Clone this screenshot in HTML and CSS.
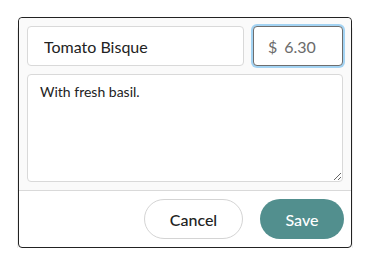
FILE: index.html
```html
<!DOCTYPE html>
<html lang="en">
<head>
    <meta charset="UTF-8">
    <meta name="viewport" content="width=device-width, initial-scale=1.0">
    <title>Edit Item</title>
    <link rel="stylesheet" href="styles.css">
</head>
<body>
    <div class="edit-card">
        <div class="edit-fields">
            <div class="field-row">
                <input class="name-input" type="text" value="Tomato Bisque">
                <div class="price-input">
                    <span class="currency">$</span>
                    <input class="price-value" type="text" value="6.30">
                </div>
            </div>
            <textarea class="desc-input">With fresh basil.</textarea>
        </div>
        <div class="edit-actions">
            <button class="btn btn-cancel">Cancel</button>
            <button class="btn btn-save">Save</button>
        </div>
    </div>
</body>
</html>
```

FILE: styles.css
```css
body {
    font-family: Lato, "Open Sans", sans-serif;
    margin: 0;
    padding: 17px 0 0 18px;
    background-color: #fff;
}
.edit-card {
    width: 332px;
    border: 1px solid #222;
    border-radius: 4px;
    background: #fff;
    box-shadow: 0 9px 0 0 #fff, 0 9px 0 1px #efefef;
}
.edit-fields {
    background: #fafafa;
    padding: 8px;
    display: flex;
    flex-direction: column;
    gap: 8px;
    border-bottom: 1px solid #d9d9d9;
    border-radius: 4px 4px 0 0;
}
.field-row {
    display: flex;
    gap: 9px;
}
.name-input {
    flex: 1;
    min-width: 0;
    height: 40px;
    box-sizing: border-box;
    border: 1px solid #d9d9d9;
    border-radius: 4px;
    background: #fff;
    padding: 0 16px;
    font-family: inherit;
    font-size: 16px;
    color: #222;
    outline: none;
}
.price-input {
    width: 90px;
    height: 40px;
    box-sizing: border-box;
    display: flex;
    align-items: center;
    gap: 7px;
    border: 1px solid #6e6e6e;
    border-radius: 4px;
    background: #fff;
    padding: 0 14px;
    box-shadow: 0 0 0 2px #a3d3f3;
    color: #6b6b6b;
    font-size: 16px;
}
.price-value {
    width: 40px;
    border: none;
    padding: 0;
    font-family: inherit;
    font-size: 16px;
    color: #6b6b6b;
    outline: none;
}
.desc-input {
    height: 108px;
    box-sizing: border-box;
    border: 1px solid #d9d9d9;
    border-radius: 4px;
    background: #fff;
    padding: 8px 12px;
    font-family: inherit;
    font-size: 14px;
    color: #222;
    outline: none;
    resize: vertical;
}
.edit-actions {
    display: flex;
    justify-content: flex-end;
    gap: 17px;
    padding: 8px 7px 8px 8px;
}
.btn {
    height: 40px;
    border-radius: 20px;
    font-family: inherit;
    font-size: 16px;
    font-weight: 500;
    cursor: pointer;
}
.btn-cancel {
    width: 99px;
    background: #fff;
    border: 1px solid #d4d4d4;
    color: #222;
}
.btn-save {
    width: 84px;
    background: #528f8e;
    border: none;
    color: #fff;
}
```
